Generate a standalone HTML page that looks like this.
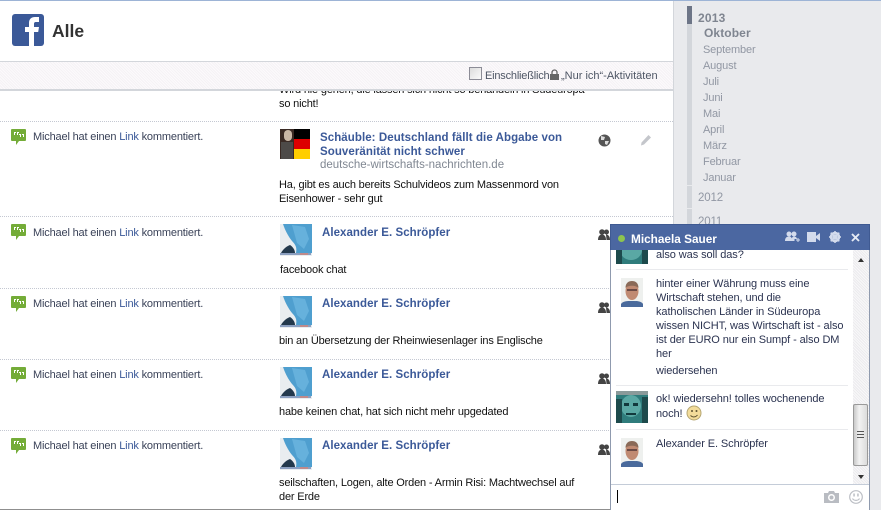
<!DOCTYPE html>
<html><head><meta charset="utf-8">
<style>
html,body{margin:0;padding:0;width:881px;height:510px;overflow:hidden;background:#fff}
body{position:relative;font-family:"Liberation Sans",sans-serif;font-size:11px;letter-spacing:-.17px;color:#111}
.a{position:absolute}
.t{position:absolute;white-space:nowrap;line-height:14px;margin-top:1px}
.sep{position:absolute;left:0;width:673px;height:0;border-top:1px dotted #c4c8d2}
.act{left:33px;color:#3a4258}
.act b{font-weight:normal;color:#3b5998}
.ti{left:322px;font-weight:bold;color:#3b5998;font-size:11.5px;letter-spacing:.05px}
.bl{left:320px;font-weight:bold;color:#3b5998;font-size:11.5px;letter-spacing:.07px}
.m{left:656px;color:#2b3350;letter-spacing:-.085px}
.mo{position:absolute;left:703px;white-space:nowrap;color:#9197a3;line-height:14px;font-size:11px;letter-spacing:-.15px;margin-top:1px}
.dv{position:absolute;left:616px;width:232px;height:1px;background:#e9eaed}
.tb{letter-spacing:0;color:#4e5665}
</style></head><body>
<svg width="0" height="0" style="position:absolute"><defs>
<symbol id="bub" viewBox="0 0 15 16"><path d="M1 0h13a1 1 0 0 1 1 1v10a1 1 0 0 1-1 1H8l-3 4v-4H1a1 1 0 0 1-1-1V1a1 1 0 0 1 1-1z" fill="#74ac38"/><path d="M3 3h2v1H4v2H3zM6 3h2v1H7v2H6zM8 5h2v3H9V6H8zM11 5h2v3h-1V6h-1z" fill="#fff"/></symbol>
<symbol id="ppl" viewBox="0 0 12 11"><circle cx="4" cy="3" r="2.800" fill="#444"/><path d="M0 11c0-3.500 1.500-5.500 4-5.500s4 2 4 5.500z" fill="#444"/><circle cx="8.500" cy="3" r="2.500" fill="#444"/><path d="M8 5.500c2.500 0 4 2 4 5.500H8.500z" fill="#444"/></symbol>
<symbol id="ava" viewBox="0 0 32 32"><rect width="32" height="32" fill="#e9edf0"/><path d="M3 0h29v29H16c1-5 0-8-4-12C8 12 5 6 3 0z" fill="#4f9fcf"/><path d="M12 1l13 2 4 12-5 10-7-6z" fill="#66b1dc"/><path d="M1 29c2-4 6-7 9-8 3 2 5 5 5 8z" fill="#23394d"/><rect x="0" y="29" width="31" height="2" fill="#8b9fc0"/><rect x="20" y="29" width="8" height="2" fill="#c08a8a"/></symbol>
<symbol id="man" viewBox="0 0 22 29"><rect width="22" height="29" fill="#eef0ee"/><path d="M0 29v-3c2-3 6-3 11-3s9 0 11 3v3z" fill="#4a6a9c"/><ellipse cx="11" cy="13" rx="6.500" ry="9" fill="#c08a72"/><path d="M4.500 10c0-5 3-7 6.500-7s6.500 2 6.500 7c-2-3-11-3-13 0z" fill="#8a6a58"/><rect x="6" y="11" width="10" height="2" fill="#6b4a45"/></symbol>
<symbol id="teal" viewBox="0 0 32 32"><rect width="32" height="32" fill="#2f7c7c"/><rect width="32" height="4" fill="#8a9a9a"/><ellipse cx="15" cy="15" rx="10" ry="11" fill="#5aa8a4"/><path d="M0 8l6 0 0 24H0zM26 6h6v26h-6z" fill="#1d4a4c"/><path d="M8 12h5v3H8zM17 12h5v3h-5zM10 22h10v2H10z" fill="#12393d"/></symbol>
</defs></svg>

<!-- main rows -->
<div class="t" style="left:279px;top:82px;color:#111">Wird nie gehen, die lassen sich nicht so behandeln in Südeuropa</div>
<div class="t" style="left:279px;top:96px">so nicht!</div>

<div class="sep" style="top:121px"></div>
<svg class="a" style="left:11px;top:129px" width="15" height="16"><use href="#bub"/></svg>
<div class="t act" style="top:129px">Michael hat einen <b>Link</b> kommentiert.</div>
<div class="a" style="left:280px;top:129px;width:30px;height:30px;background:linear-gradient(#000 0 10px,#dd0000 10px 20px,#ffce00 20px)"></div>
<div class="a" style="left:280px;top:129px;width:14px;height:30px;background:#3a2a24"></div>
<div class="a" style="left:284px;top:130px;width:8px;height:11px;border-radius:4px;background:#c9b7a5"></div>
<div class="a" style="left:281px;top:142px;width:12px;height:17px;background:#4d4a48"></div>
<div class="t bl" style="top:130px">Schäuble: Deutschland fällt die Abgabe von</div>
<div class="t bl" style="top:144px">Souveränität nicht schwer</div>
<div class="t" style="left:320px;top:157px;color:#808792;font-size:11.5px;letter-spacing:0">deutsche-wirtschafts-nachrichten.de</div>
<div class="t" style="left:279px;top:177px">Ha, gibt es auch bereits Schulvideos zum Massenmord von</div>
<div class="t" style="left:279px;top:191px">Eisenhower - sehr gut</div>
<svg class="a" style="left:598px;top:134px" width="13" height="13" viewBox="0 0 13 13"><circle cx="6.500" cy="6.500" r="6" fill="#555"/><path d="M3 2l4 1-1 3-3 0zM7 7l4 0-2 4-2-1z" fill="#ddd"/></svg>
<svg class="a" style="left:640px;top:134px" width="12" height="12" viewBox="0 0 12 12"><path d="M8.500 1l2.500 2.500-7 7L1 11.500l.5-3z" fill="#c4c6cb"/></svg>

<div class="sep" style="top:216px"></div>
<svg class="a" style="left:11px;top:224px" width="15" height="16"><use href="#bub"/></svg>
<div class="t act" style="top:225px">Michael hat einen <b>Link</b> kommentiert.</div>
<svg class="a" style="left:280px;top:224px" width="32" height="32"><use href="#ava"/></svg>
<div class="t ti" style="top:225px">Alexander E. Schröpfer</div>
<div class="t" style="left:280px;top:262px">facebook chat</div>
<svg class="a" style="left:598px;top:229px" width="12" height="11"><use href="#ppl"/></svg>

<div class="sep" style="top:288px"></div>
<svg class="a" style="left:11px;top:296px" width="15" height="16"><use href="#bub"/></svg>
<div class="t act" style="top:296px">Michael hat einen <b>Link</b> kommentiert.</div>
<svg class="a" style="left:280px;top:296px" width="32" height="32"><use href="#ava"/></svg>
<div class="t ti" style="top:296px">Alexander E. Schröpfer</div>
<div class="t" style="left:279px;top:333px">bin an Übersetzung der Rheinwiesenlager ins Englische</div>
<svg class="a" style="left:598px;top:302px" width="12" height="11"><use href="#ppl"/></svg>

<div class="sep" style="top:359px"></div>
<svg class="a" style="left:11px;top:367px" width="15" height="16"><use href="#bub"/></svg>
<div class="t act" style="top:367px">Michael hat einen <b>Link</b> kommentiert.</div>
<svg class="a" style="left:280px;top:367px" width="32" height="32"><use href="#ava"/></svg>
<div class="t ti" style="top:367px">Alexander E. Schröpfer</div>
<div class="t" style="left:279px;top:404px">habe keinen chat, hat sich nicht mehr upgedated</div>
<svg class="a" style="left:598px;top:373px" width="12" height="11"><use href="#ppl"/></svg>

<div class="sep" style="top:430px"></div>
<svg class="a" style="left:11px;top:438px" width="15" height="16"><use href="#bub"/></svg>
<div class="t act" style="top:438px">Michael hat einen <b>Link</b> kommentiert.</div>
<svg class="a" style="left:280px;top:438px" width="32" height="32"><use href="#ava"/></svg>
<div class="t ti" style="top:438px">Alexander E. Schröpfer</div>
<div class="t" style="left:279px;top:475px">seilschaften, Logen, alte Orden - Armin Risi: Machtwechsel auf</div>
<div class="t" style="left:279px;top:489px">der Erde</div>
<svg class="a" style="left:598px;top:444px" width="12" height="11"><use href="#ppl"/></svg>
<div class="a" style="left:0;top:509px;width:881px;height:1px;background:#8f8f8f"></div>

<!-- header -->
<div class="a" style="left:0;top:0;width:673px;height:61px;background:#fff"></div>
<div class="a" style="left:0;top:61px;width:673px;height:1px;background:#d3d6db"></div>
<div class="a" style="left:0;top:62px;width:673px;height:27px;background:#f9f6f8;background-image:repeating-linear-gradient(45deg,#f5f2f5 0 1px,#fcfafc 1px 2px)"></div>
<div class="a" style="left:0;top:89px;width:673px;height:2px;background:#d3d6db"></div>
<div class="a" style="left:0;top:0;width:881px;height:1px;background:#9db4d6"></div>
<div class="a" style="left:12px;top:14px;width:32px;height:32px;border-radius:3px;background:#3b5998;overflow:hidden">
<svg width="32" height="32" viewBox="0 0 32 32"><path d="M17 32V18h-4v-5h4v-4c0-4 2.400-6 6-6h4v5h-3c-1.600 0-2 .8-2 2v3h5l-.8 5H22v14z" fill="#fff"/></svg></div>
<div class="t" style="left:52px;top:21px;font-size:17.500px;letter-spacing:0;line-height:20px;font-weight:bold;color:#333;margin-top:0">Alle</div>
<div class="a" style="left:469px;top:67px;width:11px;height:11px;border:1px solid #8c8c96;background:linear-gradient(135deg,#dcdcdc,#fbfbfb)"></div>
<div class="t tb" style="left:485px;top:68px;letter-spacing:-.2px">Einschließlich</div>
<svg class="a" style="left:550px;top:69px" width="9" height="11" viewBox="0 0 9 11"><path d="M2 5V3.500a2.500 2.500 0 0 1 5 0V5" fill="none" stroke="#666" stroke-width="1.300"/><rect x="0" y="5" width="9" height="6" fill="#666"/></svg>
<div class="t tb" style="left:561px;top:68px">„Nur ich“-Aktivitäten</div>

<!-- sidebar -->
<div class="a" style="left:673px;top:1px;width:208px;height:509px;background:#e9eaed;border-left:1px solid #d3d6db;box-sizing:border-box"></div>
<div class="a" style="left:687px;top:6px;width:5px;height:179px;background:#d3d6db"></div>
<div class="a" style="left:687px;top:6px;width:5px;height:18px;background:#6d7587"></div>
<div class="a" style="left:687px;top:186px;width:5px;height:22px;background:#d3d6db"></div>
<div class="a" style="left:687px;top:209px;width:5px;height:16px;background:#d3d6db"></div>
<div class="mo" style="left:698px;top:10px;font-weight:bold;color:#7f8590;font-size:12px;letter-spacing:.2px">2013</div>
<div class="mo" style="left:704px;top:26px;font-weight:bold;color:#7f8590;font-size:12px;letter-spacing:.1px;margin-top:0">Oktober</div>
<div class="mo" style="top:42px">September</div>
<div class="mo" style="top:58px">August</div>
<div class="mo" style="top:74px">Juli</div>
<div class="mo" style="top:90px">Juni</div>
<div class="mo" style="top:106px">Mai</div>
<div class="mo" style="top:122px">April</div>
<div class="mo" style="top:138px">März</div>
<div class="mo" style="top:154px">Februar</div>
<div class="mo" style="top:170px">Januar</div>
<div class="mo" style="left:698px;top:190px;font-size:11.500px">2012</div>
<div class="mo" style="left:698px;top:214px;font-size:11.500px">2011</div>

<!-- chat -->
<div class="a" style="left:610px;top:224px;width:260px;height:286px;background:#fff;border:1px solid #8f9aae;border-bottom:0;box-sizing:border-box"></div>
<svg class="a" style="left:616px;top:250px" width="32" height="14" viewBox="0 0 32 14"><rect width="32" height="14" fill="#2f7c7c"/><ellipse cx="15" cy="0" rx="11" ry="10" fill="#5aa8a4"/><path d="M0 0h6v14H0zM26 0h6v14h-6z" fill="#1d4a4c"/></svg>
<div class="t m" style="top:247px">also was soll das?</div>
<div class="dv" style="top:269px"></div>
<svg class="a" style="left:621px;top:278px" width="22" height="29"><use href="#man"/></svg>
<div class="t m" style="top:276px">hinter einer Währung muss eine</div>
<div class="t m" style="top:290px">Wirtschaft stehen, und die</div>
<div class="t m" style="top:304px">katholischen Länder in Südeuropa</div>
<div class="t m" style="top:318px">wissen NICHT, was Wirtschaft ist - also</div>
<div class="t m" style="top:332px">ist der EURO nur ein Sumpf - also DM</div>
<div class="t m" style="top:346px">her</div>
<div class="t m" style="top:363px">wiedersehen</div>
<div class="dv" style="top:385px"></div>
<svg class="a" style="left:616px;top:391px" width="32" height="32"><use href="#teal"/></svg>
<div class="t m" style="top:391px">ok! wiedersehn! tolles wochenende</div>
<div class="t m" style="top:406px">noch!</div>
<svg class="a" style="left:686px;top:405px" width="16" height="16" viewBox="0 0 16 16"><circle cx="8" cy="8" r="7" fill="#f3dc9a" stroke="#b5a673"/><circle cx="6" cy="6" r="1" fill="#5d5230"/><circle cx="10.500" cy="6" r="1" fill="#5d5230"/><path d="M4.500 10.500c2 2 5 2 7 -.5" fill="none" stroke="#5d5230"/></svg>
<div class="dv" style="top:429px"></div>
<svg class="a" style="left:621px;top:438px" width="22" height="29"><use href="#man"/></svg>
<div class="t m" style="top:436px">Alexander E. Schröpfer</div>

<!-- scrollbar -->
<div class="a" style="left:853px;top:250px;width:16px;height:234px;background:#f1f0f2;background-image:repeating-linear-gradient(45deg,#ecebee 0 1px,#f8f8f9 1px 2px)"></div>
<div class="a" style="left:858px;top:258px;width:0;height:0;border:3px solid transparent;border-top:0;border-bottom:4px solid #333"></div>
<div class="a" style="left:853px;top:404px;width:15px;height:62px;border:1px solid #9a9a9a;border-radius:2px;box-sizing:border-box;background:linear-gradient(90deg,#c9c9c9,#f2f2f2 40%,#dcdcdc)"></div>
<div class="a" style="left:857px;top:431px;width:7px;height:7px;background:repeating-linear-gradient(#555 0 1px,transparent 1px 3px)"></div>
<div class="a" style="left:858px;top:475px;width:0;height:0;border:3px solid transparent;border-bottom:0;border-top:4px solid #333"></div>

<!-- input -->
<div class="a" style="left:611px;top:484px;width:258px;height:1px;background:#c4ccd8"></div>
<div class="a" style="left:611px;top:485px;width:258px;height:24px;background:#fff"></div>
<div class="a" style="left:617px;top:490px;width:1px;height:13px;background:#000"></div>
<svg class="a" style="left:824px;top:491px" width="15" height="12" viewBox="0 0 15 12"><path d="M0 2h4l1-2h5l1 2h4v10H0z" fill="#b9bcc2"/><circle cx="7.500" cy="6.500" r="3.500" fill="#fff"/><circle cx="7.500" cy="6.500" r="2" fill="#b9bcc2"/></svg>
<svg class="a" style="left:849px;top:490px" width="14" height="14" viewBox="0 0 14 14"><circle cx="7" cy="7" r="6.300" fill="#fff" stroke="#bcbfc5" stroke-width="1.200"/><rect x="4.300" y="3.500" width="1.500" height="3" fill="#bcbfc5"/><rect x="8.200" y="3.500" width="1.500" height="3" fill="#bcbfc5"/><path d="M3.500 8.500c1.500 2.500 5.500 2.500 7 0" fill="none" stroke="#bcbfc5" stroke-width="1.200"/></svg>

<!-- chat header -->
<div class="a" style="left:610px;top:224px;width:260px;height:26px;background:#4b67a1;border:1px solid #3f5a92;border-bottom:0;box-sizing:border-box"></div>
<div class="a" style="left:618px;top:235px;width:7px;height:7px;border-radius:50%;background:#8dc44f"></div>
<div class="t" style="left:631px;top:231px;font-weight:bold;color:#fff;font-size:11.800px;letter-spacing:0">Michaela Sauer</div>
<svg class="a" style="left:785px;top:231px" width="15" height="13" viewBox="0 0 15 13"><circle cx="4" cy="3" r="2.500" fill="#d3dbec"/><circle cx="9" cy="3" r="2.500" fill="#d3dbec"/><path d="M0 10c0-3 1.500-4.500 4-4.500S6 6 6.500 7 7 5.500 9 5.500 12 7 12 8H9.500v2z" fill="#d3dbec"/><path d="M11 8.500h1.500V7h1v1.500H15v1h-1.500V11h-1V9.500H11z" fill="#d3dbec"/></svg>
<svg class="a" style="left:807px;top:232px" width="13" height="10" viewBox="0 0 13 10"><rect width="9" height="10" fill="#d3dbec"/><path d="M9 4l4-3v8L9 6z" fill="#d3dbec"/></svg>
<svg class="a" style="left:829px;top:231px" width="12" height="12" viewBox="0 0 12 12"><circle cx="6" cy="6" r="4" fill="none" stroke="#d3dbec" stroke-width="2.500"/><path d="M6 0v12M0 6h12M1.700 1.700l8.600 8.600M10.300 1.700l-8.600 8.600" stroke="#d3dbec" stroke-width="1.500"/></svg>
<svg class="a" style="left:851px;top:233px" width="9" height="9" viewBox="0 0 9 9"><path d="M1 1l7 7M8 1L1 8" stroke="#e6ebf4" stroke-width="1.900"/></svg>
</body></html>
